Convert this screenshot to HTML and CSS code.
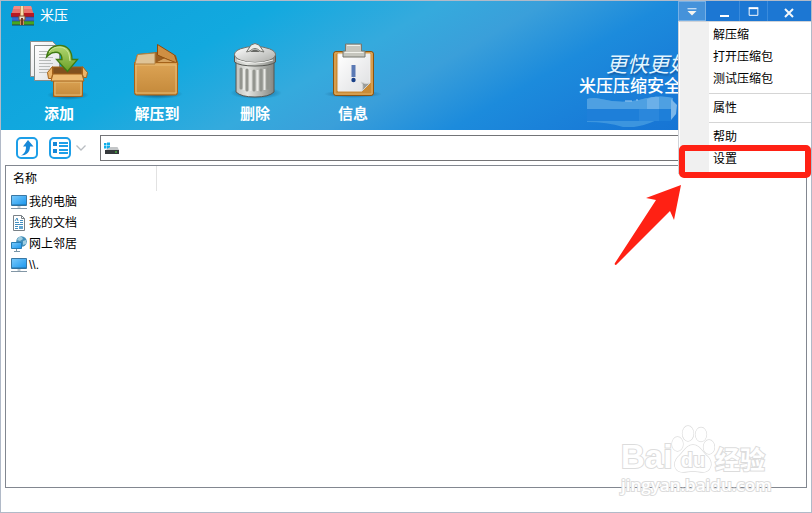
FILE: index.html
```html
<!DOCTYPE html>
<html lang="zh-CN">
<head>
<meta charset="utf-8">
<title>米压</title>
<link rel="stylesheet" href="styles.css">
</head>
<body>
<svg class="defs" aria-hidden="true">
  <defs>
    <linearGradient id="card" x1="0" y1="0" x2="0" y2="1"><stop offset="0" stop-color="#dda455"/><stop offset="1" stop-color="#c4893a"/></linearGradient>
    <linearGradient id="green" x1="0" y1="0" x2="0" y2="1"><stop offset="0" stop-color="#b2d873"/><stop offset="1" stop-color="#6a9f25"/></linearGradient>
    <linearGradient id="metal" x1="0" y1="0" x2="1" y2="0"><stop offset="0" stop-color="#bfc1bd"/><stop offset=".3" stop-color="#e4e5e1"/><stop offset="1" stop-color="#858782"/></linearGradient>
    <linearGradient id="lid" x1="0" y1="0" x2="1" y2="1"><stop offset="0" stop-color="#ffffff"/><stop offset="1" stop-color="#a9aba7"/></linearGradient>
    <linearGradient id="paper" x1="0" y1="0" x2="1" y2="1"><stop offset="0" stop-color="#ffffff"/><stop offset="1" stop-color="#dedfe1"/></linearGradient>
    <linearGradient id="screen" x1="0" y1="0" x2="1" y2="1"><stop offset="0" stop-color="#7ccbfb"/><stop offset="1" stop-color="#1795ee"/></linearGradient>
    <radialGradient id="shade"><stop offset="0" stop-color="#06395c" stop-opacity=".75"/><stop offset="1" stop-color="#06395c" stop-opacity="0"/></radialGradient>
    <symbol id="pc" viewBox="0 0 16 16"><path d="M.5 1.500h15v10H.5z" fill="url(#screen)" stroke="#3a78a4"/><path d="M1 11h14" stroke="#246c9e"/><path d="M6.500 12h3v2h-3z" fill="#c2cdd4"/><path d="M0 14.500h16" stroke="#8296a5"/></symbol>
  </defs>
</svg>
<main class="window">
  <header class="banner">
    <div class="titlebar">
      <svg class="logo" viewBox="0 0 24 22" aria-hidden="true">
        <path d="M3 1h17l3 9H0z" fill="#e8726c"/><path d="M3 1h17l1 3H2z" fill="#f58a83"/><path d="M0 8h23v4H0z" fill="#b81822"/><path d="M1 12h22v4H1z" fill="#3568cc"/><path d="M1 16h22v4H1z" fill="#47a51f"/><path d="M1 20h22" stroke="#243f49"/><path d="M0 12h23M1 16h22" stroke="#243f79" stroke-width=".6"/><path d="M9 1h4v19H9z" fill="#cb9260"/><path d="M11 1v10" stroke="#f7ddad" stroke-width="2"/><path d="M8 11h6v4H8z" fill="#eee1ca" stroke="#835331"/><path d="M11 13v7" stroke="#743a20" stroke-width="2"/>
      </svg>
      <h1 class="title">米压</h1>
      <div class="controls">
        <button class="control control-menu" aria-label="菜单" aria-expanded="true"><svg viewBox="0 0 28 20"><path d="M9 7.500h10" stroke="#fff"/><path d="M9 10h10l-5 5z" fill="#f4f4ef"/></svg></button>
        <button class="control" aria-label="最小化"><svg viewBox="0 0 28 20"><path d="M10 15h9" stroke="#fff" stroke-width="2"/></svg></button>
        <button class="control control-max" aria-label="最大化"><svg viewBox="0 0 28 20"><path d="M9.500 7.500h9v7h-9z" fill="none" stroke="#fff"/><path d="M9 7h10" stroke="#fff" stroke-width="2"/></svg></button>
        <button class="control control-close" aria-label="关闭"><svg viewBox="0 0 28 20"><path d="m9 8 8 8M17 8l-8 8" stroke="#f3f7fb" stroke-width="2"/></svg></button>
      </div>
    </div>
    <div class="tools">
      <nav class="actions" aria-label="工具">
        <button class="action">
          <svg viewBox="27 38 64 64" aria-hidden="true"><ellipse cx="68" cy="95" rx="21" ry="5" fill="url(#shade)"/><path d="M30.500 41.500h22l5 5v30h-27z" fill="url(#paper)" stroke="#8b908f"/><path d="M34.500 45.500h21l4 4v31h-25z" fill="url(#paper)" stroke="#858b8a"/><path d="M39 51.500h15M39 54.500h12M39 57.500h14M39 60.500h12M39 63.500h14M39 66.500h11M39 69.500h10M39 72.500h9" stroke="#b7bab9"/><path d="M53 67h29v13H53z" fill="#82511e" stroke="#a4621a"/><path d="M53.500 78.500h29v18h-29z" fill="url(#card)" stroke="#a4621a"/><path d="M55 82h26v13H55z" fill="none" stroke="#e6bd78"/><path d="m52.500 66.500-5 6 1 6h3l1-4zM82.500 66.500l5 6-1 5h-3l-1-3z" fill="#edb568" stroke="#a4621a"/><path d="M53 74h29l2 7H51z" fill="#efbd73" stroke="#a4621a"/><path d="M46.500 57C48 49 53 45.500 60 45.500c8 0 12 6 12 14h5.500l-10 12-11-12H62c0-6-4-8-8-7-3 0-5 2-7.500 4.500z" fill="url(#green)" stroke="#3f7a12" stroke-width="1.300"/><path d="M49 52c5-7 17-7 20 2l1 7" fill="none" stroke="#d0e99d"/></svg>
          <span>添加</span>
        </button>
        <button class="action">
          <svg viewBox="125 38 64 64" aria-hidden="true"><ellipse cx="158" cy="94" rx="25" ry="5" fill="url(#shade)"/><path d="m134.500 64.500 3-10 20-2 18 3 2.500 9z" fill="#9b5e21" stroke="#a4621a"/><path d="m157.500 44.500 17 10.500 3 9-20-9z" fill="#cf8f43" stroke="#8c4c0c"/><path d="m156 62 8-4 13 5" fill="#d6a35e" stroke="#975816"/><path d="M134.500 62.500h43v30q0 2.500-2 2.500h-39q-2 0-2-2.500z" fill="url(#card)" stroke="#a4621a"/><path d="M136 65h40v28h-40z" fill="none" stroke="#e9bd77"/><path d="M137.500 54.500 155 53v11h-20z" fill="#dfc497" stroke="#b38444"/></svg>
          <span>解压到</span>
        </button>
        <button class="action">
          <svg viewBox="223 38 64 64" aria-hidden="true"><ellipse cx="256" cy="93" rx="26" ry="6" fill="url(#shade)"/><path d="M236 62h38v30q-5 5-19 5t-19-5z" fill="url(#metal)" stroke="#555753"/><g fill="none" stroke="#93958f" stroke-width="3" stroke-linecap="round"><path d="M241 69v19M247 70v20M254 71v19M261 70v20M268 69v19"/></g><path d="M244 69v21M250.500 70v21M257.500 70v21M264.500 69v21" stroke="#e9eae6" stroke-width="2"/><path d="M234.500 55v7q5 4 20.500 4t20.500-4v-7z" fill="url(#metal)" stroke="#555753"/><ellipse cx="255" cy="54.500" rx="20.500" ry="8" fill="url(#lid)" stroke="#6e706b"/><path d="M237 60q18 6 36 0" fill="none" stroke="#f6f6f4"/><path d="m246.500 52 4.500-7q4-3 8 0l5 7-4-1q-5-5-10 0z" fill="#eeeeea" stroke="#70726d"/><path d="M250 52q5-5 10 0z" fill="#666864"/></svg>
          <span>删除</span>
        </button>
        <button class="action">
          <svg viewBox="321 38 64 64" aria-hidden="true"><ellipse cx="353" cy="94" rx="29" ry="4" fill="url(#shade)"/><rect x="333.500" y="51.500" width="40" height="44" rx="2.500" fill="#ca8b36" stroke="#8b5410"/><path d="M335 53h37v41h-37z" fill="none" stroke="#e2b067"/><path d="M338 54h32v29l-8 8h-24z" fill="url(#paper)" stroke="#eee"/><path d="M370 83q-4 2-9-1 3 3 1 9z" fill="#999b99" stroke="#d3d4d3"/><path d="M345.500 47v-3h16v7h3.500v6h-22v-6h2.500z" fill="#c6c6be" stroke="#777870"/><path d="M347 45.500h13M344.500 52.500h19" stroke="#f1f1eb"/><path d="M353.500 65v12" stroke="#5a79b4" stroke-width="4"/><circle cx="353.500" cy="80" r="2.200" fill="#183f87"/></svg>
          <span>信息</span>
        </button>
      </nav>
      <div class="slogan">
        <p class="slogan-main">更快更好</p>
        <p class="slogan-sub">米压压缩安全</p>
        <svg class="smudge" viewBox="0 0 100 32" aria-hidden="true"><path d="M8 4q6-2 14 0 20 5 38 1 20-6 34-2v17l-4 3q-6 3-12 2-20 9-34 7-16-5-36-5V14z" fill="#3c95df"/><path d="M8 4q6-2 14 0 20 5 38 1 20-6 34-2v11H8z" fill="#4ea0e2"/><path d="M68 4q6-3 12-2v12H68z" fill="#6bb0e9"/><path d="M8 14h84v12H68H8z" fill="#1e7fd9"/><path d="M60 14h20v12H60z" fill="#2a87dc"/><path d="M92 4l6 6-1 9-5 6z" fill="#7bb7ea"/><path d="M46 6h7M58 4v2" stroke="#a3cdf0" fill="none"/></svg>
      </div>
    </div>
  </header>
  <div class="location">
    <button class="nav-button" aria-label="向上"><svg viewBox="0 0 22 22"><rect x="1" y="1" width="20" height="20" rx="4" fill="#fff" stroke="#1d9fe8" stroke-width="2"/><path d="M5 18.500c5 0 9-3 9-9h3.500L12 3 7 9.500h3c0 4-1 7-5 9z" fill="#1688d8"/></svg></button>
    <button class="nav-button" aria-label="视图"><svg viewBox="0 0 22 22"><rect x="1" y="1" width="20" height="20" rx="4" fill="#fff" stroke="#1d9fe8" stroke-width="2"/><path d="M4 5h4v4H4zM4 12h4v4H4z" fill="#1688d8"/><path d="M10 6h9M10 9h9M10 13h9M10 16h9" stroke="#1d9fe8" stroke-width="2"/></svg></button>
    <button class="view-toggle" aria-label="视图选项"><svg viewBox="0 0 10 6"><path d="m.5.5 4.500 4.500L9.500.5" fill="none" stroke="#b9bdc2" stroke-width="1.300"/></svg></button>
    <label class="address">
      <svg viewBox="0 0 16 16" aria-hidden="true"><path d="M1 3h2.500v2.500H1zM4 2.500h3v3H4zM1 6h2.500v2.500H1zM4 6h3v3H4z" fill="#10aee9"/><path d="m3 10 1.500-1.500L7.500 7h7L16 10H2.500z" fill="#c3c6c8"/><path d="M2 10h14v4H2z" fill="#35393b"/><path d="M12 12h2" stroke="#4de341"/></svg>
      <input type="text" aria-label="地址">
    </label>
  </div>
  <section class="files">
    <table>
      <thead><tr><th scope="col">名称</th></tr></thead>
      <tbody>
        <tr><td><span class="file"><svg><use href="#pc"/></svg>我的电脑</span></td></tr>
        <tr><td><span class="file"><svg viewBox="0 0 16 16"><path d="M2.500.5h8l3 3v12h-11z" fill="#fff" stroke="#798187"/><path d="M10.500.5v3h3" fill="none" stroke="#798187"/><path d="m4 6 2-3 1 3M4 7.500h4M9 5.500h3M9 7.500h3M4 9.500h8M4 11.500h3M4 13.500h3" fill="none" stroke="#438ebf"/><path d="M8 11h4v3H8z" fill="#63a6d2"/></svg>我的文档</span></td></tr>
        <tr><td><span class="file"><svg viewBox="0 0 16 16"><circle cx="10.500" cy="5.500" r="5.300" fill="#438fb9"/><path d="M8 1q3-1 4 2l-3 2-3-1zM12 5l3-1v4l-3 1z" fill="#a0cde0"/><path d="M.5 6.500h10v6H.5z" fill="url(#screen)" stroke="#287eb5"/><path d="M5.500 13v2M3 15.500h6" stroke="#7895a8"/></svg>网上邻居</span></td></tr>
        <tr><td><span class="file"><svg><use href="#pc"/></svg>\\.</span></td></tr>
      </tbody>
    </table>
  </section>
  <div class="watermark" aria-hidden="true">
    <div class="mark-row"><span class="mark-latin">Bai</span>
      <span class="paw"><svg viewBox="0 0 44 48"><g fill="#fff" stroke="#dcdcdc" stroke-width="1.300"><ellipse cx="6.500" cy="19" rx="5.500" ry="7"/><ellipse cx="17" cy="8.500" rx="5.500" ry="7.500"/><ellipse cx="30" cy="9.500" rx="5.500" ry="7"/><ellipse cx="38" cy="22" rx="5.500" ry="7"/><path d="M22 20c7 0 9 7 15 12 6 7 2 15-5 15-4 0-6-1-10-1s-6 1-10 1c-8 0-11-8-5-15 6-5 8-12 15-12z"/></g></svg><span class="paw-text">du</span></span>
      <span class="mark-cjk">经验</span>
    </div>
    <div class="mark-url">jingyan.baidu.com</div>
  </div>
  <ul class="menu">
    <li><button>解压缩</button></li>
    <li><button>打开压缩包</button></li>
    <li><button>测试压缩包</button></li>
    <li class="separated"><button>属性</button></li>
    <li class="separated"><button>帮助</button></li>
    <li class="marked"><button>设置</button>
      <svg class="pointer" viewBox="0 0 68 82" aria-hidden="true"><path d="M67 0 60 35l-4-9L2 80q-2 0-1-2L42 15l-10-2z" fill="#ff2114"/></svg>
    </li>
  </ul>
</main>
</body>
</html>
```
FILE: styles.css
```css
* { box-sizing: border-box; }

body {
  margin: 0;
  font: 12px/20px "Liberation Sans", "Noto Sans CJK SC", sans-serif;
  color: #000;
}

button {
  padding: 0;
  border: 0;
  background: none;
  font: inherit;
  color: inherit;
}

svg { display: block; }

.defs {
  position: absolute;
  width: 0;
  height: 0;
}

.window {
  position: relative;
  display: flex;
  flex-direction: column;
  min-height: 100vh;
  overflow: hidden;
  border: 1px solid #b1bac8;
  background: #fff;
}

.banner {
  color: #fff;
  background: linear-gradient(150deg, #0da0da 0%, #12a9df 27%, #35aadd 43%, #3a9fda 53%, #1c8bdc 65%, #1878d6 82%, #126ccf 100%);
}

.titlebar {
  display: flex;
  align-items: flex-start;
  height: 28px;
}

.logo {
  width: 24px;
  height: 22px;
  margin: 4px 5px 0 10px;
}

.title {
  margin: 4px 0 0;
  font-size: 14px;
  line-height: 20px;
  font-weight: 400;
}

.controls {
  display: flex;
  margin-left: auto;
  background: #1c77d3;
}

.control {
  width: 31px;
  height: 20px;
  border-right: 1px solid #3a8bdc;
}

.control svg {
  width: 28px;
  height: 20px;
  margin: 0 auto;
}

.control-menu {
  width: 28px;
  margin-right: 3px;
  border: 1px solid #77b0e5;
  background: #4592da;
}

.control-menu svg {
  width: 26px;
  height: 18px;
}

.control-max { width: 28px; }

.control-max svg { width: 27px; }

.control-close {
  width: 43px;
  border-right: 0;
}

.tools {
  display: flex;
  justify-content: space-between;
  height: 101px;
  padding-left: 9px;
}

.actions { display: flex; }

.action {
  display: flex;
  flex-direction: column;
  align-items: center;
  width: 98px;
  padding-top: 9px;
  font-size: 15px;
  line-height: 24px;
  font-weight: 700;
}

.action svg {
  width: 64px;
  height: 64px;
}

.slogan { width: 232px; }

.slogan p {
  margin: 0;
  white-space: nowrap;
}

.slogan-main {
  padding: 23px 0 0 27px;
  font-size: 21px;
  line-height: 26px;
  font-style: italic;
  color: #e4f6ff;
  text-shadow: 1px 2px 2px #145ba2;
}

.slogan-sub {
  font: 500 17px/18px "Liberation Serif", "Noto Sans CJK SC", serif;
}

.smudge {
  width: 100px;
  height: 32px;
  margin-top: -1px;
}

.location {
  display: flex;
  align-items: center;
  gap: 11px;
  height: 35px;
  padding-left: 15px;
}

.nav-button svg {
  width: 22px;
  height: 22px;
}

.view-toggle {
  margin: 0 3px 0 -6px;
}

.view-toggle svg {
  width: 10px;
  height: 6px;
}

.address {
  display: flex;
  flex: 1;
  align-items: center;
  height: 26px;
  margin-right: 4px;
  padding-left: 2px;
  border: 1px solid #737477;
}

.address svg {
  width: 16px;
  height: 16px;
}

.address input {
  flex: 1;
  border: 0;
  outline: 0;
  font: inherit;
}

.files {
  flex: 1;
  margin: 0 4px 24px;
  border: 1px solid #828790;
}

table {
  border-spacing: 0;
}

th {
  width: 151px;
  height: 25px;
  padding: 0 7px;
  border-right: 1px solid #e2e2e2;
  text-align: left;
  font-weight: 400;
}

td {
  height: 21px;
  padding: 0 5px;
}

.file {
  display: flex;
  align-items: center;
  gap: 2px;
}

.file svg {
  width: 16px;
  height: 16px;
}

.menu {
  position: absolute;
  top: 20px;
  right: 0;
  width: 133px;
  margin: 0;
  padding: 2px 0 3px;
  list-style: none;
  border: 1px solid #d0d3d8;
  border-right: 0;
  background: linear-gradient(to right, #fff 1px, #f0f0f0 1px, #f0f0f0 30px, #fff 30px);
}

.menu button {
  display: block;
  width: 100%;
  padding-left: 34px;
  line-height: 22px;
  text-align: left;
}

.separated::before {
  content: "";
  display: block;
  height: 1px;
  margin: 3px 0 3px 30px;
  background: #d5d5d5;
}

.marked { position: relative; }

.marked::after {
  content: "";
  position: absolute;
  inset: -3px 0 -8px 0;
  border: 6px solid #ff2114;
  border-radius: 5px;
}

.pointer {
  position: absolute;
  top: 37px;
  right: 129px;
  width: 68px;
  height: 82px;
}

.watermark {
  position: absolute;
  right: 43px;
  bottom: 15px;
  width: 147px;
  font-family: "Liberation Sans", "Noto Sans CJK SC", sans-serif;
  font-weight: 700;
  color: #fff;
  -webkit-text-stroke: 2px #dcdcdc;
  paint-order: stroke fill;
}

.mark-row {
  display: flex;
  align-items: flex-end;
  height: 48px;
}

.mark-latin {
  width: 50px;
  font-size: 33px;
  line-height: 32px;
}

.paw { position: relative; }

.paw svg {
  width: 44px;
  height: 48px;
}

.paw-text {
  position: absolute;
  right: 0;
  bottom: 2px;
  left: 0;
  font-size: 20px;
  line-height: 22px;
  text-align: center;
}

.mark-cjk {
  font-size: 25px;
  line-height: 26px;
}

.mark-url {
  font: 600 17px/24px "Open Sans", sans-serif;
  text-align: center;
  white-space: nowrap;
}
```
